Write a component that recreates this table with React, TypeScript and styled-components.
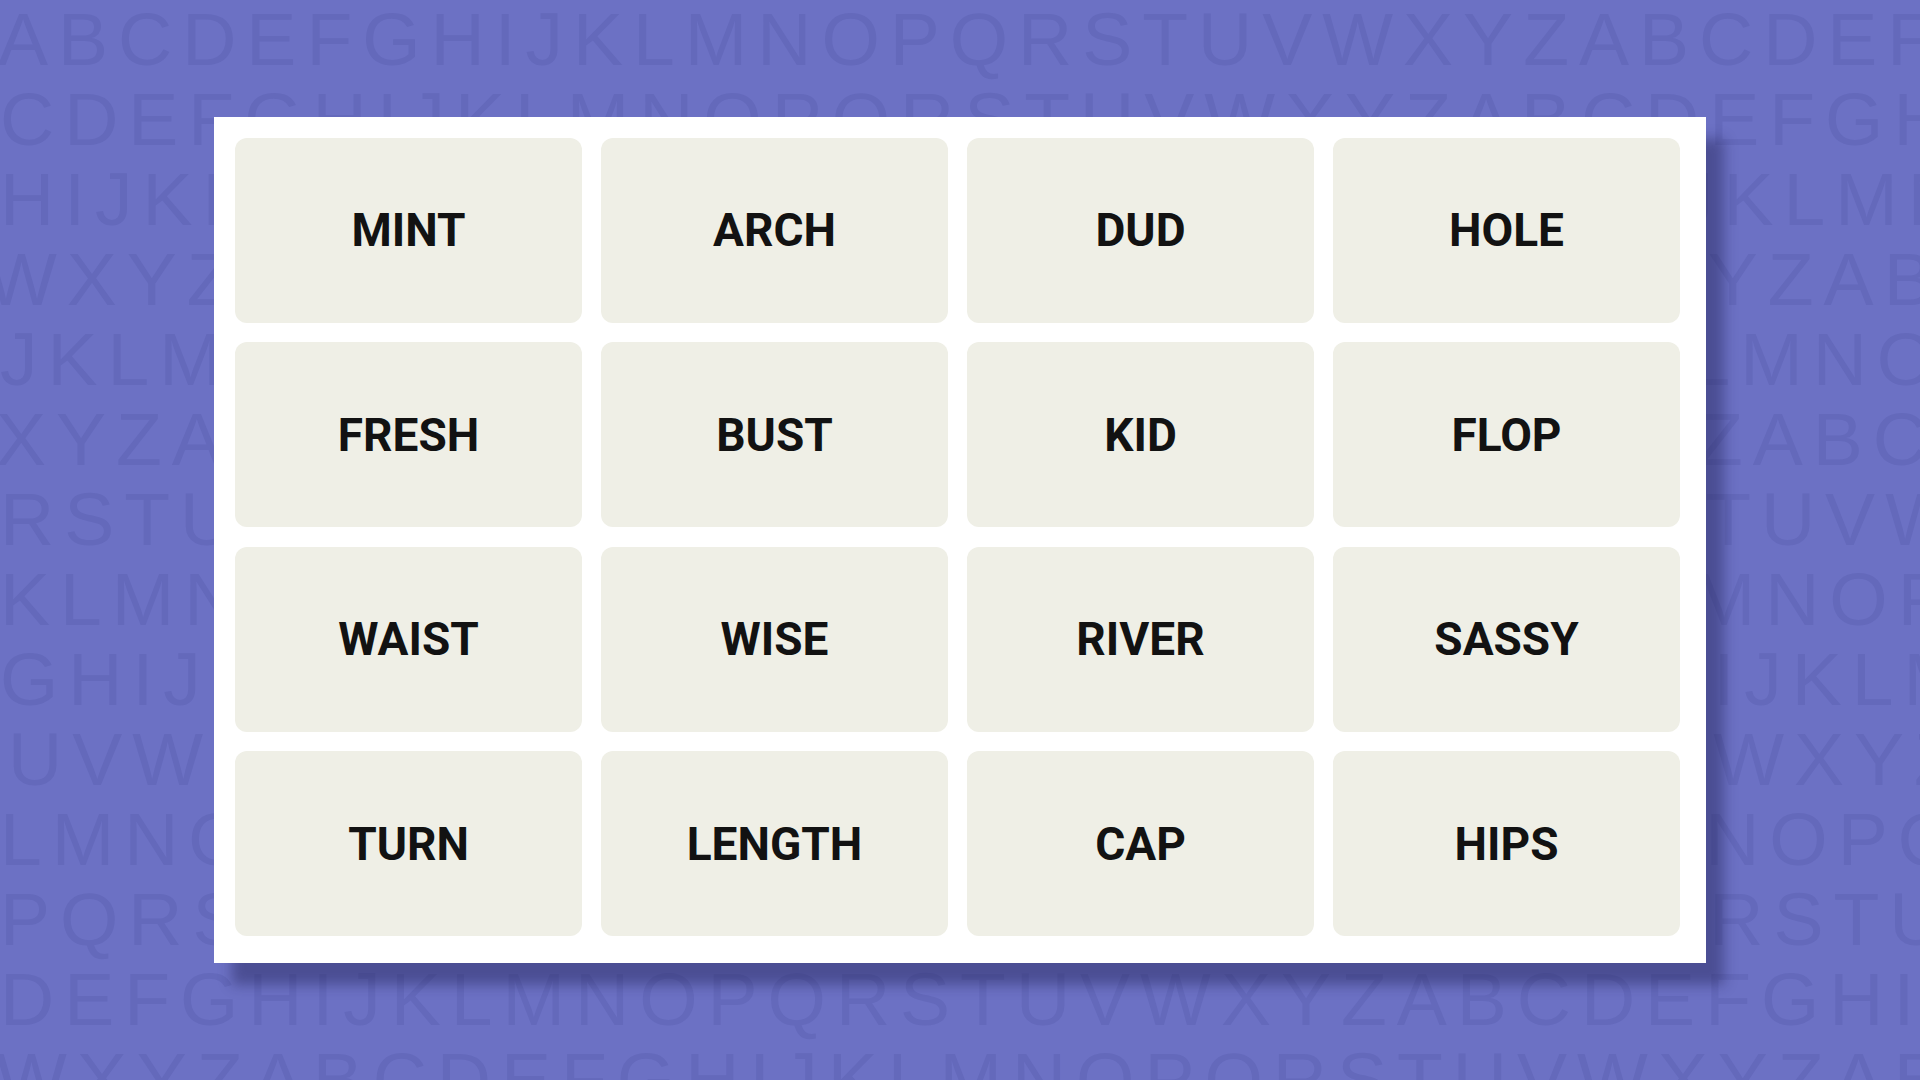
import styled, { createGlobalStyle } from "styled-components";

const GlobalStyle = createGlobalStyle`
    html, body {
        margin: 0;
        padding: 0;
        width: 1920px;
        height: 1080px;
        overflow: hidden;
        background: #6c71c4;
    }
`;

const Stage = styled.div`
    position: relative;
    width: 1920px;
    height: 1080px;
    display: flex;
    align-items: center;
    justify-content: center;
    overflow: hidden;
    background: #6c71c4;
`;

const LetterBackdrop = styled.div`
    position: absolute;
    inset: 0;
    display: flex;
    flex-direction: column;
    margin-top: -1px;
    pointer-events: none;
`;

const LetterRow = styled.div<{ $shift: number }>`
    font-family: "Liberation Sans", Arial, sans-serif;
    font-size: 75px;
    line-height: 80px;
    letter-spacing: 10px;
    color: #6469bb;
    white-space: nowrap;
    margin-left: ${(p) => p.$shift}px;
`;

const Board = styled.div`
    position: relative;
    width: 1492px;
    box-sizing: border-box;
    padding: 21px 26px 27px 21px;
    background: #ffffff;
    box-shadow: 18px 22px 12px rgba(30, 32, 80, 0.42);
    display: grid;
    grid-template-columns: repeat(4, 347px);
    grid-auto-rows: 185px;
    column-gap: 19px;
    row-gap: 19.5px;
`;

const Tile = styled.div`
    background: #efefe6;
    border-radius: 12px;
    display: flex;
    align-items: center;
    justify-content: center;
    font-family: Roboto, "Liberation Sans", sans-serif;
    font-weight: 700;
    font-size: 46px;
    color: #121212;
    text-transform: uppercase;
`;

const ALPHABET = "ABCDEFGHIJKLMNOPQRSTUVWXYZ";

const rowStarts: { letter: string; shift: number }[] = [
    { letter: "A", shift: -2 },
    { letter: "C", shift: 0 },
    { letter: "H", shift: 0 },
    { letter: "W", shift: -14 },
    { letter: "J", shift: 0 },
    { letter: "X", shift: -4 },
    { letter: "R", shift: 0 },
    { letter: "K", shift: 0 },
    { letter: "G", shift: 0 },
    { letter: "U", shift: 8 },
    { letter: "L", shift: 0 },
    { letter: "P", shift: 0 },
    { letter: "D", shift: 0 },
    { letter: "W", shift: -4 },
];

const makeRow = (start: string) => {
    const from = ALPHABET.indexOf(start);
    let out = "";
    for (let i = 0; i < 36; i++) {
        out += ALPHABET[(from + i) % 26];
    }
    return out;
};

const words = [
    "MINT", "ARCH", "DUD", "HOLE",
    "FRESH", "BUST", "KID", "FLOP",
    "WAIST", "WISE", "RIVER", "SASSY",
    "TURN", "LENGTH", "CAP", "HIPS",
];

const App = () => {
    return (
        <>
            <GlobalStyle />
            <Stage>
                <LetterBackdrop>
                    {rowStarts.map((row, i) => (
                        <LetterRow key={i} $shift={row.shift}>
                            {makeRow(row.letter)}
                        </LetterRow>
                    ))}
                </LetterBackdrop>
                <Board>
                    {words.map((word) => (
                        <Tile key={word}>{word}</Tile>
                    ))}
                </Board>
            </Stage>
        </>
    );
};

export default App;
